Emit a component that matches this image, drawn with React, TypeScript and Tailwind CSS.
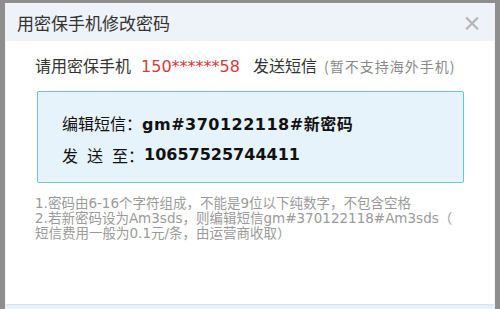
const cjk = "font-['Noto_Sans_CJK_SC','Microsoft_YaHei',sans-serif]";
const latin = "font-['DejaVu_Sans','Noto_Sans_CJK_SC',sans-serif]";

function App() {
  return (
    <div className={`w-[500px] h-[309px] overflow-hidden bg-[#8e8e8e] pt-[3px] px-[5px] ${cjk}`}>
      <div className="h-full border border-[#f2f2f2] bg-white flex flex-col">
        {/* header */}
        <div className="h-[37px] shrink-0 bg-[#eef2f9] flex items-center justify-between pl-[11px] pr-[12px]">
          <span className="text-[17px] text-[#333] leading-none">用密保手机修改密码</span>
          <span className="text-[20px] leading-none text-[#b4b4b4] font-bold">×</span>
        </div>

        {/* body */}
        <div className="flex-1 pl-[29px] pr-[20px] pt-[12px]">
          <p className="flex items-baseline whitespace-nowrap text-[16px] text-[#333] leading-[24px]">
            <span>请用密保手机</span>
            <span className={`ml-[10px] text-[#d23c3c] ${latin}`}>150******58</span>
            <span className="ml-[13px]">发送短信</span>
            <span className="ml-[7px] text-[14px] tracking-[1px] text-[#888]">(暂不支持海外手机)</span>
          </p>

          <div className="mt-[12px] ml-[2px] w-[427px] h-[92px] border border-[#6cc6d3] rounded-[2px] bg-[#e6f3fa] pl-[24px] pt-[16px] text-[16px] text-[#111] leading-[30px]">
            <div className="flex items-baseline">
              <span>编辑短信：</span>
              <span className={`font-bold tracking-[0.5px] ${latin}`}>gm#370122118#新密码</span>
            </div>
            <div className="flex items-baseline gap-[9px]">
              <span>发</span>
              <span>送</span>
              <span className="flex">
                <span>至：</span>
                <span className={`font-bold ${latin}`}>10657525744411</span>
              </span>
            </div>
          </div>

          <div className={`mt-[13px] whitespace-nowrap text-[13.5px] leading-[15px] text-[#9a9a9a] ${latin}`}>
            <p>1.密码由6-16个字符组成，不能是9位以下纯数字，不包含空格</p>
            <p>2.若新密码设为Am3sds，则编辑短信gm#370122118#Am3sds（</p>
            <p>短信费用一般为0.1元/条，由运营商收取）</p>
          </div>
        </div>

        <div className="h-[4px] shrink-0 bg-[#e4f1fb] border-t border-[#d5e6f3]" />
      </div>
    </div>
  );
}

export default App;
